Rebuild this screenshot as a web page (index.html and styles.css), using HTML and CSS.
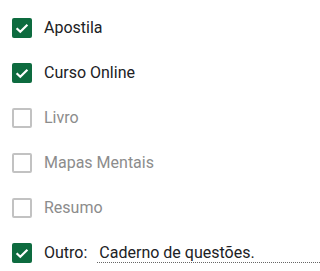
FILE: index.html
```html
<!DOCTYPE html>
<html>
<head>
<meta charset="utf-8">
<link rel="stylesheet" href="styles.css">
</head>
<body>
<div class="list">
  <div class="opt checked">
    <span class="box"><svg viewBox="0 0 20 20" width="20" height="20"><path d="M4.6 10.2 L8.3 13.8 L15.4 6.7" fill="none" stroke="#fff" stroke-width="2.2"/></svg></span>
    <span class="label">Apostila</span>
  </div>
  <div class="opt checked">
    <span class="box"><svg viewBox="0 0 20 20" width="20" height="20"><path d="M4.6 10.2 L8.3 13.8 L15.4 6.7" fill="none" stroke="#fff" stroke-width="2.2"/></svg></span>
    <span class="label">Curso Online</span>
  </div>
  <div class="opt">
    <span class="box"></span>
    <span class="label">Livro</span>
  </div>
  <div class="opt">
    <span class="box"></span>
    <span class="label">Mapas Mentais</span>
  </div>
  <div class="opt">
    <span class="box"></span>
    <span class="label">Resumo</span>
  </div>
  <div class="opt checked">
    <span class="box"><svg viewBox="0 0 20 20" width="20" height="20"><path d="M4.6 10.2 L8.3 13.8 L15.4 6.7" fill="none" stroke="#fff" stroke-width="2.2"/></svg></span>
    <span class="label">Outro:</span>
    <span class="other">Caderno de questões.</span>
  </div>
</div>
</body>
</html>
```
FILE: styles.css
```css
html, body {
  margin: 0;
  padding: 0;
  background: #ffffff;
}
body {
  font-family: Roboto, "Liberation Sans", sans-serif;
  font-size: 16px;
  color: #202124;
  overflow: hidden;
}
.list {
  display: flex;
  flex-direction: column;
  gap: 25px;
  padding: 18px 0 0 12px;
}
.opt {
  display: flex;
  align-items: flex-start;
  height: 20px;
}
.box {
  width: 20px;
  height: 20px;
  box-sizing: border-box;
  border: 2px solid #c2c2c2;
  border-radius: 2px;
  flex: none;
  display: block;
}
.box svg {
  display: block;
}
.checked .box {
  border: none;
  background: #0d6b3f;
  border-radius: 2px;
}
.label {
  margin-left: 12px;
  line-height: 20px;
  color: #8c8c8c;
}
.checked .label {
  color: #202124;
}
.other {
  display: block;
  margin-left: 10px;
  flex: 1 1 auto;
  min-width: 0;
  box-sizing: border-box;
  height: 20px;
  line-height: 19px;
  padding-left: 2px;
  border-bottom: 1px dotted #666666;
}
```
